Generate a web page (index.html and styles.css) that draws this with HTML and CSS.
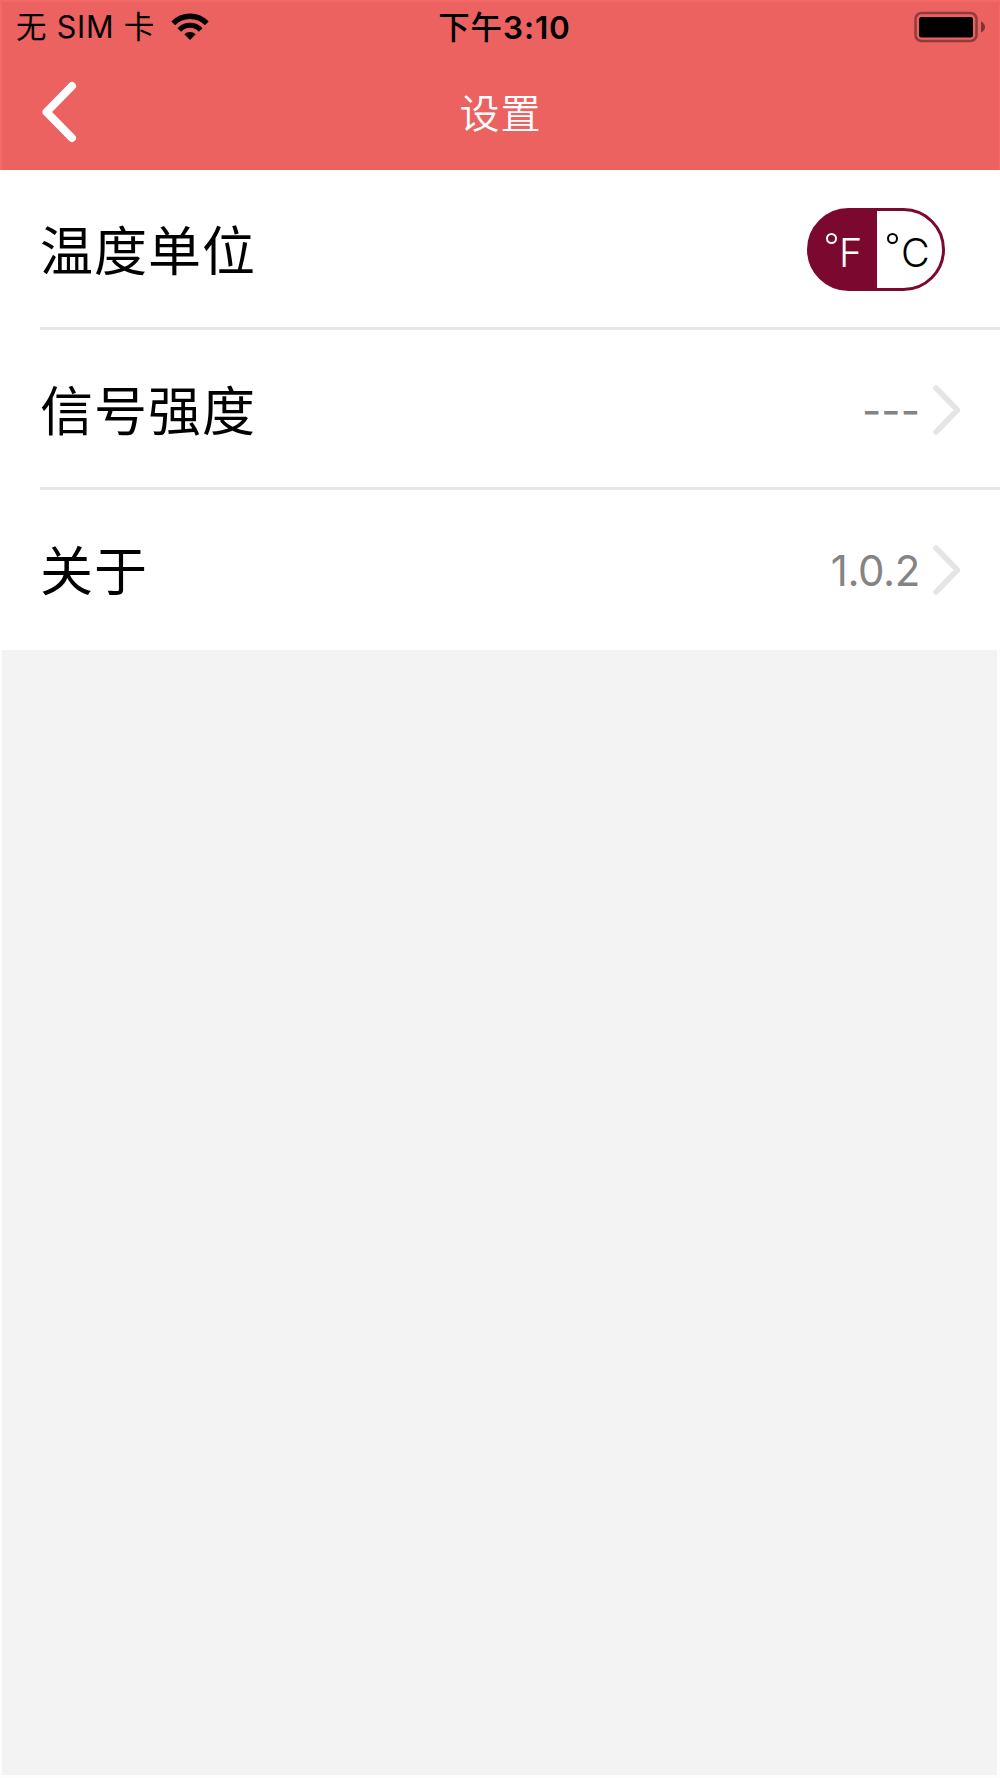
FILE: index.html
```html
<!DOCTYPE html>
<html lang="zh-CN">
<head>
<meta charset="utf-8">
<title>设置</title>
<link rel="stylesheet" href="styles.css">
</head>
<body>
<header class="header">
  <div class="status">
    <div class="carrier">
      <span class="carrier-name">无 SIM 卡</span>
      <svg class="wifi" width="38" height="28" viewBox="0 0 38 28">
        <path d="M2.200 10.300A23.500 23.500 0 0 1 35.800 10.300" fill="none" stroke="#000" stroke-width="5.400"/>
        <path d="M8.300 16.900A14.800 14.800 0 0 1 29.700 16.900" fill="none" stroke="#000" stroke-width="5"/>
        <path d="M13.300 21.300A8 8 0 0 1 24.700 21.300L19 27Z"/>
      </svg>
    </div>
    <time class="clock">下午<span class="clock-digits">3:10</span></time>
    <svg class="battery" width="72" height="32" viewBox="0 0 72 32">
      <rect x="1.500" y="2" width="61" height="28" rx="6" fill="none" stroke="#8f3d3c" stroke-width="2.500"/>
      <rect x="5" y="6" width="54" height="20.500" rx="2.500"/>
      <path d="M67 10.500Q71 12.500 71 16T67 21.500Z" fill="#7c3434"/>
    </svg>
  </div>
  <nav class="nav">
    <svg class="back" width="36" height="62" viewBox="0 0 36 62"><path d="M31 5L5.500 31L31 57" fill="none" stroke="#fff" stroke-width="8" stroke-linecap="round" stroke-linejoin="round"/></svg>
    <h1 class="title">设置</h1>
  </nav>
</header>
<main class="list">
  <section class="row">
    <span class="label">温度单位</span>
    <div class="toggle">
      <span class="unit unit-on"><i class="degree"></i>F</span>
      <span class="unit"><i class="degree"></i>C</span>
    </div>
  </section>
  <section class="row row-signal">
    <span class="label">信号强度</span>
    <span class="value dashes">---</span>
    <svg class="chevron" width="28" height="50" viewBox="0 0 28 50"><path d="M3 3L24.500 25L3 47" fill="none" stroke="#e5e5e5" stroke-width="5.500" stroke-linecap="round" stroke-linejoin="round"/></svg>
  </section>
  <section class="row row-last">
    <span class="label">关于</span>
    <span class="value">1.0.2</span>
    <svg class="chevron" width="28" height="50" viewBox="0 0 28 50"><path d="M3 3L24.500 25L3 47" fill="none" stroke="#e5e5e5" stroke-width="5.500" stroke-linecap="round" stroke-linejoin="round"/></svg>
  </section>
</main>
<div class="blank"></div>
</body>
</html>
```
FILE: styles.css
```css
* { box-sizing: border-box; }
body {
  margin: 0;
  width: 1000px;
  height: 1778px;
  display: flex;
  flex-direction: column;
  background: #fdfdfd;
  font-family: Inter, "Noto Sans CJK SC", sans-serif;
  color: #000;
}
svg { display: block; flex: none; }
.header {
  height: 170px;
  background: #ec6260;
  border: solid #f46866;
  border-width: 2px 1px 0 2px;
}
.status {
  height: 50px;
  padding: 0 13px 0 14px;
  display: grid;
  grid-template-columns: 1fr auto 1fr;
  align-items: center;
  font-size: 30.5px;
  line-height: 50px;
}
.carrier { display: flex; align-items: center; gap: 16px; }
.carrier-name { white-space: nowrap; letter-spacing: 0.8px; }
.clock {
  padding: 2px 0 0 7px;
  font-weight: 500;
  font-size: 31.5px;
  line-height: 48px;
  white-space: nowrap;
  letter-spacing: 0.9px;
}
.clock-digits { font-weight: 600; }
.battery { justify-self: end; }
.nav {
  height: 118px;
  padding: 2px 39px 0;
  display: grid;
  grid-template-columns: 1fr auto 1fr;
  align-items: center;
}
.title {
  margin: 0;
  padding-top: 3px;
  color: #fff;
  font-size: 40px;
  font-weight: 350;
  letter-spacing: 1px;
  line-height: 60px;
}
.list { background: #fff; height: 480px; }
.row {
  height: 160px;
  margin-left: 40px;
  padding: 1px 39px 0 0;
  display: flex;
  align-items: center;
  border-bottom: 3px solid #e6e6e6;
}
.row-signal { padding-top: 3px; }
.row-last { border-bottom: 0; padding-top: 0; }
.label {
  flex: 1;
  padding-top: 6px;
  font-size: 53px;
  letter-spacing: 1px;
  line-height: 80px;
}
.row-signal .label, .row-last .label { padding-top: 4px; }
.value { margin-right: 13px; font-size: 42px; letter-spacing: -0.4px; color: #848484; }
.dashes { padding-top: 1px; letter-spacing: 0; }
.toggle {
  width: 138px;
  height: 83px;
  margin-right: 16px;
  display: flex;
  border: 3px solid #7b082f;
  border-radius: 42px;
  background: linear-gradient(90deg, #7b082f 67px, #fff 67px);
}
.unit {
  flex: 1;
  display: flex;
  align-items: center;
  gap: 3px;
  padding: 7px 0 0 10px;
  font-size: 39.5px;
  font-weight: 300;
}
.unit-on { flex: none; width: 67px; padding-left: 16px; gap: 2px; color: #fff; }
.degree {
  width: 11px;
  height: 11px;
  margin-bottom: 28px;
  border: 2px solid currentColor;
  border-radius: 50%;
}
.blank { flex: 1; margin: 0 3px 3px 2px; background: #f3f3f3; }
```
